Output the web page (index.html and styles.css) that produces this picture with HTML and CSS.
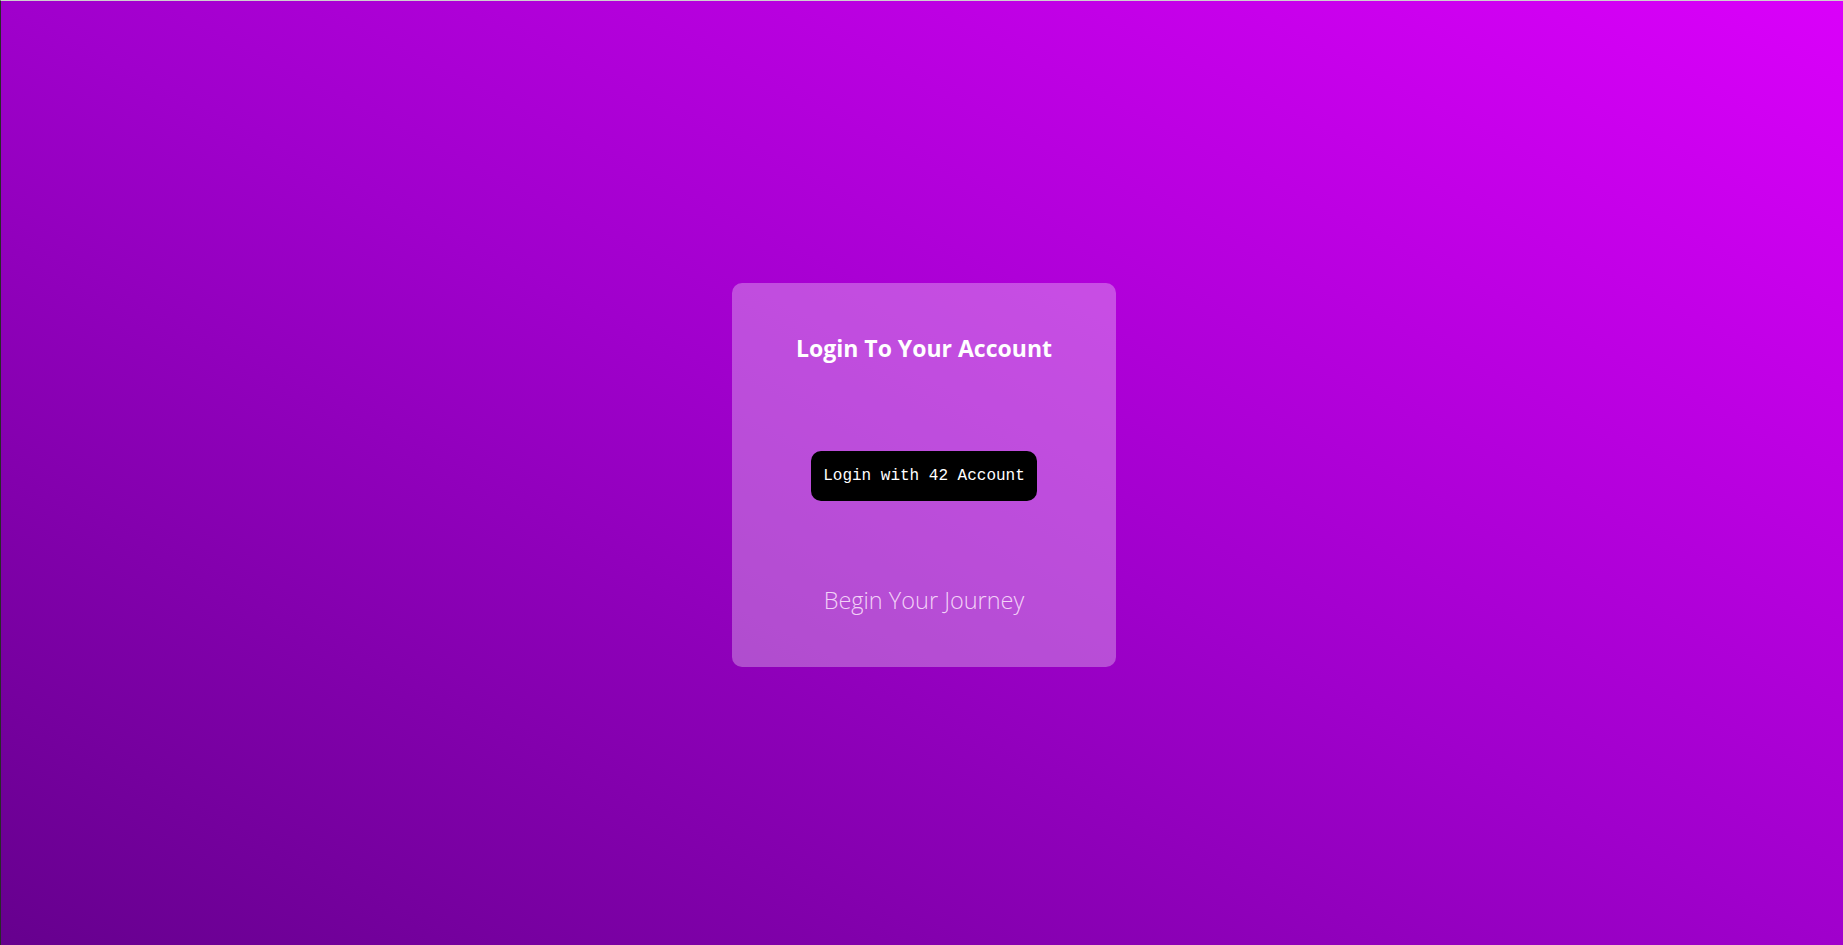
FILE: index.html
```html
<!DOCTYPE html>
<html lang="en">
<head>
<meta charset="utf-8">
<title>Login</title>
<link rel="stylesheet" href="styles.css">
</head>
<body>
<main class="page">
  <section class="card">
    <h1 class="card-title">Login To Your Account</h1>
    <button class="login-btn" type="button">Login with 42 Account</button>
    <p class="tagline">Begin Your Journey</p>
  </section>
</main>
</body>
</html>
```
FILE: styles.css
```css
* { box-sizing: border-box; }
html, body { margin: 0; padding: 0; height: 100%; }
body { overflow: hidden; }
.page {
  height: 945px;
  border-top: 1px solid #cfcfcf;
  border-left: 1px solid #2a2a2a;
  background: linear-gradient(to top right, #66008e 0%, #a000cc 50%, #da00fa 100%);
  display: flex;
  align-items: center;
  justify-content: center;
  padding-left: 4px;
  padding-top: 4px;
}
.card {
  width: 384px;
  height: 384px;
  border-radius: 10px;
  background: rgba(255, 255, 255, 0.3);
  display: flex;
  flex-direction: column;
  align-items: center;
  padding-top: 49px;
}
.card-title {
  margin: 0;
  font-family: "Open Sans", "Noto Sans", sans-serif;
  font-weight: 700;
  font-size: 23px;
  line-height: 32px;
  color: #ffffff;
}
.login-btn {
  margin-top: 87px;
  height: 50px;
  padding: 0 12px;
  border: none;
  border-radius: 10px;
  background: #000000;
  color: #ffffff;
  font-family: "Liberation Mono", monospace;
  font-size: 16px;
}
.tagline {
  margin: 83px 0 0;
  font-family: "Open Sans", sans-serif;
  font-weight: 300;
  font-size: 23.5px;
  line-height: 32px;
  color: rgba(255, 235, 255, 0.85);
}
```
